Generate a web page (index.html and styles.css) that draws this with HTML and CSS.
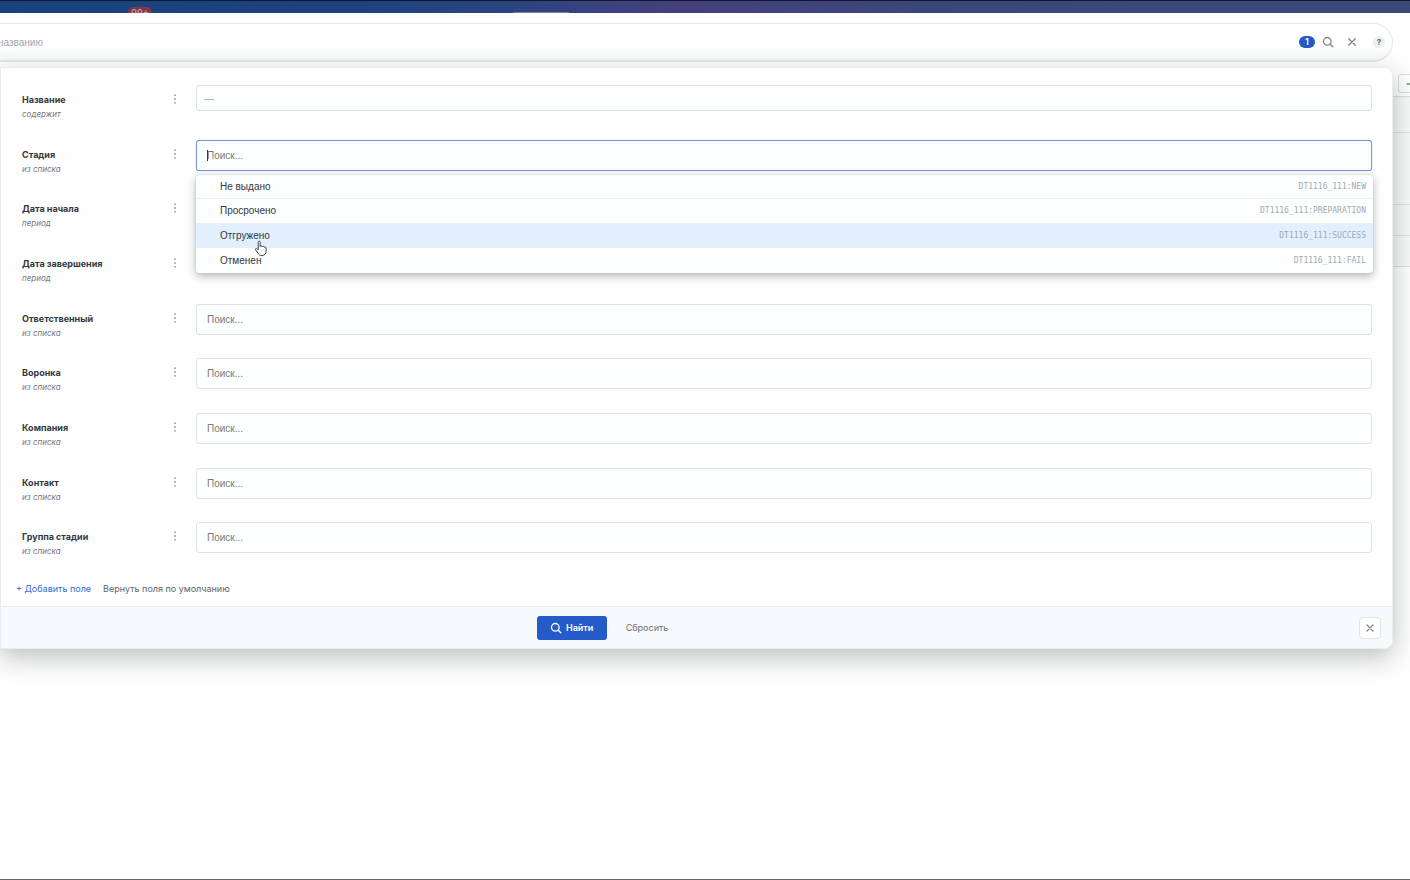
FILE: index.html
```html
<!DOCTYPE html>
<html lang="ru">
<head>
<meta charset="utf-8">
<title>Фильтр</title>
<link rel="stylesheet" href="styles.css">
</head>
<body>
<header class="topbar"><span class="topbar-badge">99+</span><span class="topbar-tab"></span></header>
<main class="page">
  <div class="main-column">
    <div class="searchbar">
      <input class="search-input" type="text" placeholder="названию" aria-label="Поиск по названию">
      <span class="count">1</span>
      <button class="icon-btn" aria-label="Найти"><svg width="12" height="12" viewBox="0 0 12 12"><circle cx="5.3" cy="5.3" r="3.8"/><path d="M8.2 8.2 10.8 10.8"/></svg></button>
      <button class="icon-btn clear" aria-label="Очистить"><svg width="12" height="12" viewBox="0 0 12 12"><path d="M2.7 2.7 9.3 9.3M9.3 2.7 2.7 9.3"/></svg></button>
      <button class="help" aria-label="Справка">?</button>
    </div>
    <form class="panel">
      <div class="fields">
        <div class="field"><label class="label" for="f1"><b>Название</b><i>содержит</i></label><button type="button" class="dots" aria-label="Меню"><svg width="4" height="10" viewBox="0 0 4 10"><circle cx="2" cy="1.2" r=".9"/><circle cx="2" cy="5" r=".9"/><circle cx="2" cy="8.8" r=".9"/></svg></button><div class="control"><input id="f1" class="input short" type="text" placeholder="—"></div></div>
        <div class="field"><label class="label" for="f2"><b>Стадия</b><i>из списка</i></label><button type="button" class="dots" aria-label="Меню"><svg width="4" height="10" viewBox="0 0 4 10"><circle cx="2" cy="1.2" r=".9"/><circle cx="2" cy="5" r=".9"/><circle cx="2" cy="8.8" r=".9"/></svg></button>
          <div class="control"><input id="f2" class="input active" type="text" placeholder="Поиск..."><span class="caret"></span>
            <ul class="dropdown" role="listbox">
              <li role="option"><span>Не выдано</span><code>DT1116_111:NEW</code></li>
              <li role="option"><span>Просрочено</span><code>DT1116_111:PREPARATION</code></li>
              <li role="option" class="hover"><span>Отгружено</span><code>DT1116_111:SUCCESS</code>
                <svg class="cursor" width="14" height="17" viewBox="0 0 14 17"><path d="M4.2 9.4V2.3c0-1.6 2-1.6 2 0v4.2c.3-.9 1.900-.8 2 .3.4-.8 1.900-.6 2 .5.5-.6 1.900-.4 1.900.9v2.900c0 2.500-1.400 4.400-4 4.400-2.400 0-3.200-.8-4.200-2.500L1.600 9.900c-.7-1.100.7-2 1.500-1.200z"/></svg></li>
              <li role="option"><span>Отменен</span><code>DT1116_111:FAIL</code></li>
            </ul></div></div>
        <div class="field"><span class="label"><b>Дата начала</b><i>период</i></span><button type="button" class="dots" aria-label="Меню"><svg width="4" height="10" viewBox="0 0 4 10"><circle cx="2" cy="1.2" r=".9"/><circle cx="2" cy="5" r=".9"/><circle cx="2" cy="8.8" r=".9"/></svg></button></div>
        <div class="field"><span class="label"><b>Дата завершения</b><i>период</i></span><button type="button" class="dots" aria-label="Меню"><svg width="4" height="10" viewBox="0 0 4 10"><circle cx="2" cy="1.2" r=".9"/><circle cx="2" cy="5" r=".9"/><circle cx="2" cy="8.8" r=".9"/></svg></button></div>
        <div class="field"><label class="label" for="f5"><b>Ответственный</b><i>из списка</i></label><button type="button" class="dots" aria-label="Меню"><svg width="4" height="10" viewBox="0 0 4 10"><circle cx="2" cy="1.2" r=".9"/><circle cx="2" cy="5" r=".9"/><circle cx="2" cy="8.8" r=".9"/></svg></button><div class="control"><input id="f5" class="input" type="text" placeholder="Поиск..."></div></div>
        <div class="field"><label class="label" for="f6"><b>Воронка</b><i>из списка</i></label><button type="button" class="dots" aria-label="Меню"><svg width="4" height="10" viewBox="0 0 4 10"><circle cx="2" cy="1.2" r=".9"/><circle cx="2" cy="5" r=".9"/><circle cx="2" cy="8.8" r=".9"/></svg></button><div class="control"><input id="f6" class="input" type="text" placeholder="Поиск..."></div></div>
        <div class="field"><label class="label" for="f7"><b>Компания</b><i>из списка</i></label><button type="button" class="dots" aria-label="Меню"><svg width="4" height="10" viewBox="0 0 4 10"><circle cx="2" cy="1.2" r=".9"/><circle cx="2" cy="5" r=".9"/><circle cx="2" cy="8.8" r=".9"/></svg></button><div class="control"><input id="f7" class="input" type="text" placeholder="Поиск..."></div></div>
        <div class="field"><label class="label" for="f8"><b>Контакт</b><i>из списка</i></label><button type="button" class="dots" aria-label="Меню"><svg width="4" height="10" viewBox="0 0 4 10"><circle cx="2" cy="1.2" r=".9"/><circle cx="2" cy="5" r=".9"/><circle cx="2" cy="8.8" r=".9"/></svg></button><div class="control"><input id="f8" class="input" type="text" placeholder="Поиск..."></div></div>
        <div class="field"><label class="label" for="f9"><b>Группа стадии</b><i>из списка</i></label><button type="button" class="dots" aria-label="Меню"><svg width="4" height="10" viewBox="0 0 4 10"><circle cx="2" cy="1.2" r=".9"/><circle cx="2" cy="5" r=".9"/><circle cx="2" cy="8.8" r=".9"/></svg></button><div class="control"><input id="f9" class="input" type="text" placeholder="Поиск..."></div></div>
      </div>
      <div class="links"><button type="button" class="link add">+ Добавить поле</button><button type="button" class="link">Вернуть поля по умолчанию</button></div>
      <footer class="footer">
        <button type="button" class="submit"><svg width="12" height="12" viewBox="0 0 12 12"><circle cx="5.3" cy="5.3" r="3.8"/><path d="M8.2 8.2 10.8 10.8"/></svg>Найти</button>
        <button type="button" class="reset">Сбросить</button>
        <button type="button" class="close" aria-label="Закрыть"><svg width="10" height="10" viewBox="0 0 10 10"><path d="M2 2 8 8M8 2 2 8"/></svg></button>
      </footer>
    </form>
  </div>
  <aside class="behind">
    <button class="green" aria-label="Добавить"><svg width="8" height="6" viewBox="0 0 8 6"><path d="M3 3H8"/></svg></button>
    <div class="rows"><div class="row r1"></div><div class="row r2"></div><div class="row r3"></div><div class="row r3"></div></div>
  </aside>
</main>
</body>
</html>
```
FILE: styles.css
```css
* { box-sizing: border-box; }
body {
  margin: 0;
  min-height: 100vh;
  display: flex;
  flex-direction: column;
  overflow: hidden;
  background: #fdfefd;
  border-bottom: 1px solid #666;
  color: #33383d;
  font: 9px/15px Inter, "Liberation Sans", sans-serif;
}
button, input { font: inherit; color: inherit; margin: 0; padding: 0; border: 0; background: none; }
svg { display: block; fill: none; stroke: #80868b; stroke-width: 1.3; stroke-linecap: round; }
.topbar {
  display: flex;
  align-items: flex-start;
  gap: 359px;
  height: 13px;
  padding: 6px 0 0 128px;
  overflow: hidden;
  border-top: 1px solid #10182a;
  background: linear-gradient(90deg, #1a427d 0%, #1c437e 25%, #2b447e 36%, #46407e 48%, #3b477b 65%, #3b4979 100%);
}
.topbar-badge { width: 24px; height: 13px; border-radius: 5px; background: #853548; color: #b69aab; line-height: 12px; font-weight: 600; text-align: center; }
.topbar-tab { width: 60px; height: 8px; margin-top: 5px; border-radius: 4px; background: #7580a8; }
.page { display: grid; grid-template-columns: 1fr 17px; flex: 1; align-items: start; }
.main-column { position: relative; z-index: 1; display: flex; flex-direction: column; gap: 5px; padding-top: 10px; min-width: 0; }
.searchbar {
  display: flex;
  align-items: center;
  height: 39px;
  padding-right: 7px;
  border: 1px solid #e6e9e9;
  border-left: 0;
  border-bottom: 2px solid #e3e6e5;
  border-radius: 0 20px 20px 0;
  background: linear-gradient(#fdfefd 60%, #f7f9f9);
}
.search-input { flex: 1; min-width: 0; text-indent: -2px; outline: 0; font-family: "Liberation Sans", sans-serif; font-size: 10px; }
.search-input::placeholder { color: #a0a7ae; opacity: 1; }
.count { width: 16px; height: 12px; border-radius: 6px; background: #245bc9; color: #fff; line-height: 12px; font-weight: 600; text-align: center; }
.icon-btn { margin-left: 7px; }
.icon-btn.clear { margin-left: 12px; }
.help { width: 12px; height: 12px; margin-left: 15px; border-radius: 50%; background: #eceff1; color: #60656a; font-size: 8px; line-height: 12px; font-weight: 700; text-align: center; }
.panel {
  border: 1px solid #e9eded;
  border-radius: 0 8px 8px 0;
  background: #fdfefd;
  box-shadow: 0 8px 26px rgba(20, 28, 28, .28);
}
.fields { display: grid; grid-auto-rows: 1fr; min-height: 492px; padding: 0 20px 0 21px; margin-top: 17px; }
.field { display: grid; grid-template-columns: 151px 4px 1fr; align-items: start; }
.label { display: flex; flex-direction: column; padding-top: 7px; }
.label b { font-weight: 700; }
.label i { color: #737a80; font-size: 8px; }
.dots { height: 10px; margin-top: 9px; }
.dots svg { fill: #92989d; stroke: none; }
.control { position: relative; margin-left: 19px; }
.input { display: block; width: 100%; height: 31px; padding: 0 10px; border: 1px solid #dfe3e6; border-radius: 3px; background: #fdfefe; font-family: "Liberation Sans", sans-serif; font-size: 10px; outline: 0; }
.input::placeholder { color: #777b80; opacity: 1; }
.input.short { height: 26px; padding: 0 7px; }
.input.short::placeholder { color: #a4a8ac; }
.input.active { border-color: #7799df; box-shadow: 0 0 1px #7799df; }
.caret { position: absolute; left: 11px; top: 10px; width: 1px; height: 11px; background: #33383d; }
.dropdown {
  position: absolute;
  z-index: 2;
  top: 35px;
  left: 0;
  right: -1px;
  height: 98px;
  display: grid;
  grid-auto-rows: 1fr;
  margin: 0;
  padding: 0;
  list-style: none;
  border-radius: 3px;
  background: #fdfefe;
  box-shadow: 0 0 1px #9aa0a5, 0 3px 8px rgba(20, 28, 40, .32);
  font-family: "Liberation Sans", sans-serif;
  font-size: 10px;
}
.dropdown li { position: relative; display: flex; align-items: center; justify-content: space-between; padding: 0 7px 0 24px; border-bottom: 1px solid #eceff1; }
.dropdown li:last-child { border-bottom: 0; }
.dropdown .hover { background: #e1effe; }
.dropdown code { color: #a2a9b0; font: 8px/15px "DejaVu Sans Mono", monospace; }
.cursor { position: absolute; z-index: 3; left: 58px; top: 16px; }
.cursor path { fill: #fff; stroke: #3b3f43; stroke-width: 1; }
.links { display: flex; gap: 12px; padding: 4px 0 10px 15px; }
.link { color: #60666c; }
.link.add { color: #356ad8; }
.footer { position: relative; display: flex; align-items: center; justify-content: center; height: 42px; padding-right: 188px; border-top: 1px solid #e9edef; border-radius: 0 0 8px 0; background: #f7fafc; }
.submit { display: flex; align-items: center; justify-content: center; gap: 4px; width: 70px; height: 24px; border-radius: 3px; background: #245bc9; color: #fff; font-weight: 600; }
.submit svg { stroke: #fff; }
.reset { margin-left: 19px; color: #6b7177; }
.close { position: absolute; right: 11px; top: 10px; display: grid; place-items: center; width: 22px; height: 22px; border: 1px solid #e1e4e6; border-radius: 4px; background: #fff; }
.behind { padding-top: 61px; overflow: hidden; }
.green { display: grid; place-items: center; width: 20px; height: 19px; margin-left: 5px; border: 1px solid #cfe3d4; border-radius: 3px; }
.green svg { stroke: #51a366; }
.rows { margin-top: 3px; border-top: 1px solid #dde0e0; background: #f7f9f9; }
.row { height: 31px; border-bottom: 1px solid #dde0e0; }
.row.r1 { height: 36px; }
.row.r2 { height: 72px; }
```
